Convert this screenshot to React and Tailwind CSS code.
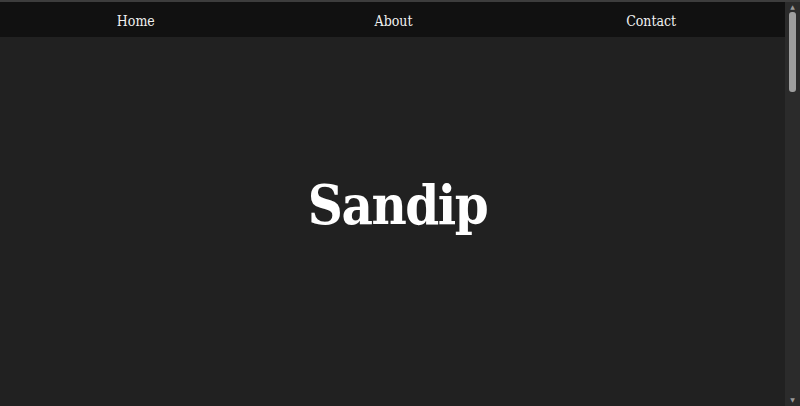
export default function App() {
  return (
    <div className="h-screen w-full bg-[#3d3d3d] pt-[2px] flex flex-col" style={{ fontFamily: '"DejaVu Serif", serif' }}>
      <div className="flex-1 flex min-h-0">
        <div className="flex-1 bg-[#212121] flex flex-col">
          <nav className="bg-[#111111] h-[35px] grid grid-cols-3 items-center pl-[7px] pr-[5px] pt-[3px]">
            <a className="text-center text-[#f0f0f0] text-[14px] font-stretch-condensed">Home</a>
            <a className="text-center text-[#f0f0f0] text-[14px] font-stretch-condensed">About</a>
            <a className="text-center text-[#f0f0f0] text-[14px] font-stretch-condensed">Contact</a>
          </nav>
          <div className="flex justify-center pt-[141px] pl-[10px]">
            <h1 className="text-white font-bold text-[54px] leading-none font-stretch-condensed tracking-[-1.5px]">Sandip</h1>
          </div>
        </div>
        <div className="w-[15px] bg-[#2b2b2b] flex flex-col items-center pt-[2px]">
          <div className="text-[#9a9a9a] text-[6px] leading-none">▲</div>
          <div className="mt-[2px] w-[7px] h-[80px] rounded-[3px] bg-[#9e9e9e]" />
          <div className="flex-1" />
          <div className="text-[#9a9a9a] text-[6px] leading-none pb-[3px]">▼</div>
        </div>
      </div>
    </div>
  );
}
